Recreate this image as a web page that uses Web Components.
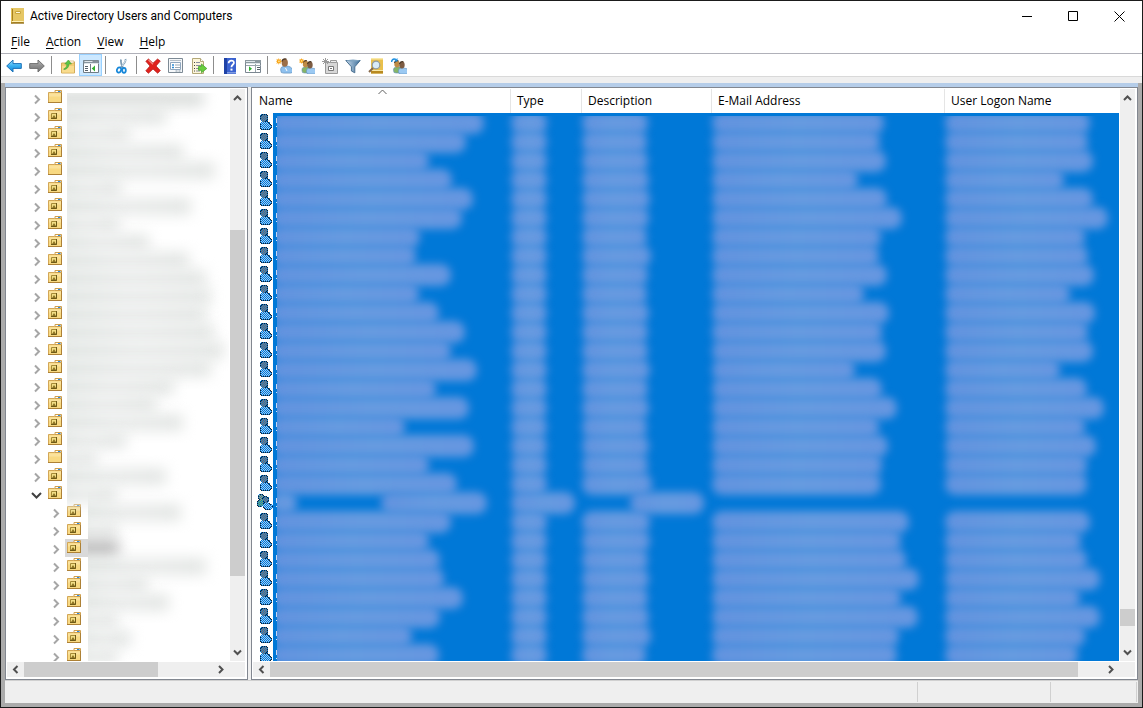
<!DOCTYPE html>
<html lang="en">
<head>
<meta charset="utf-8">
<title>Active Directory Users and Computers</title>
<style>
  html, body { margin: 0; height: 100%; }
  body { font: 12px/16px "Open Sans", "Noto Sans", sans-serif; color: #000; background: #efefef; overflow: hidden; }
</style>
</head>
<body>
<ad-window></ad-window>
<script>
/* ---------- helpers ---------- */
const svg = (w, h, body) => `<svg width="${w}" height="${h}" viewBox="0 0 ${w} ${h}" aria-hidden="true">${body}</svg>`;

class Base extends HTMLElement {
  connectedCallback() {
    if (this.shadowRoot) return;
    this.attachShadow({ mode: 'open' });
    this.shadowRoot.innerHTML = this.render();
  }
}

const person = (x, y, head, body) =>
  `<path d="M${x - 3} ${y + 8.500}q-1.600-4.500 1.400-5.200l2.600-.6q5 .4 6 3.800q.5 2.500-2 2.500h-6z" fill="${body}" stroke="#5f8fbd" stroke-width=".6"/><ellipse cx="${x}" cy="${y}" rx="2.700" ry="3.400" fill="${head}"/><path d="M${x - 2.600} ${y - 1}q1-3 4-2.200" stroke="#4c3826" stroke-width="1.100" fill="none"/>`;
const spark = `<path d="M4 0l1 2.400 2.600-1.200-1.200 2.500L9 4.800l-2.600.9 1.100 2.500-2.500-1.100L4 9.600l-1-2.500-2.500 1.100 1.100-2.500L0 4.800l1.600-1.100L.5 1.200 3 2.400z" fill="#f8a61c"/><circle cx="4.200" cy="4.700" r="1.300" fill="#ffe08a"/>`;

const ICONS = {
  back: `<defs><linearGradient id="g" x2="0" y2="1"><stop stop-color="#9fe0ff"/><stop offset=".5" stop-color="#35aef0"/><stop offset="1" stop-color="#1382d4"/></linearGradient></defs><path d="M.7 8L7 2v3.600h8.300v4.800H7V14z" fill="url(#g)" stroke="#1d72b8"/>`,
  forward: `<defs><linearGradient id="g" x2="0" y2="1"><stop stop-color="#c2c2c2"/><stop offset=".5" stop-color="#8d8d8d"/><stop offset="1" stop-color="#777"/></linearGradient></defs><path d="M15.300 8L9 2v3.600H.7v4.800H9V14z" fill="url(#g)" stroke="#707070"/>`,
  up: `<path d="M1.500 5h5l1-1h7v11h-13z" fill="#f3cd73" stroke="#d3ac5b"/><path d="M9 3h5v2H9z" fill="#fff" stroke="#c99d45" stroke-width=".6"/><path d="M2 8h12v6.500H2z" fill="#f9dc8e"/><path d="M3.500 11c3-1 3.300-3 3.300-5H4.800L8.300 2 11.500 6H9c0 3.500-2.500 5.500-5 5.500z" fill="#5cc446" stroke="#3a9a30" stroke-width=".5"/>`,
  panes: `<path d="M.5 2.500h15v12H.5z" fill="#fff" stroke="#6f7c86"/><path d="M.5 2.500h15v3H.5z" fill="#87949d"/><path d="M1.500 3.500h8M1.500 5.500h14" stroke="#dfe6ea"/><path d="M7.500 6v8" stroke="#6f7c86"/><path d="M2 8.500h3M2 10.500h3M2 12.500h3" stroke="#56616a"/><path d="M12 7.500v6L8.700 10.500z" fill="#2fb02f"/>`,
  cut: `<path d="M11.500 1c1 3-2.500 5-5 9M7 1.500c-.5 3 0 5 2.500 9" stroke="#7d9cb4" stroke-width="1.800" fill="none"/><path d="M12.300 1.500L8 8" stroke="#dce8f0"/><ellipse cx="5" cy="12" rx="2" ry="2.600" fill="none" stroke="#1687d9" stroke-width="1.800" transform="rotate(25 5 12)"/><ellipse cx="10" cy="12.300" rx="1.800" ry="2.500" fill="none" stroke="#1687d9" stroke-width="1.800"/>`,
  delete: `<path d="M3.500 1L8 5.200 12.500 1 15.300 3 11 8l4.300 4.600-2.600 2.700L8 11l-4.600 4.300L.8 12.800 5 8 .8 3.300z" fill="#e0221d" stroke="#b01714" stroke-width=".7"/><path d="M3.500 2L8 6.300" stroke="#f58a80" stroke-width="1.200"/>`,
  props: `<path d="M.5.5h14v14H.5z" fill="#f6f8fa" stroke="#7d8a95"/><path d="M2 2.500h11" stroke="#b4bec6"/><path d="M2.500 4.500h10v7h-10z" fill="#fff" stroke="#8fa6bd"/><path d="M4 7h2M4 9.500h2" stroke="#2d8bd2" stroke-width="1.500"/><path d="M7 7h5M7 9.500h5" stroke="#9ba9b4"/><path d="M7.500 13h2M10.500 13h2" stroke="#8496a5"/>`,
  export: `<path d="M1.500.5h8l3 3v12h-11z" fill="#fdf6da" stroke="#b3a878"/><path d="M9.500.5v3h3" fill="#fff" stroke="#b3a878"/><path d="M3 4.500h1M3 7.500h1M3 10.500h1M3 13h1" stroke="#444"/><path d="M5 4.500h4M5 7.500h5M5 10.500h3M5 13h4" stroke="#8b8fa0"/><path d="M7.500 8.500h3V6l5.300 4.500-5.300 4.300v-2.500h-3z" fill="#69cf3f" stroke="#3f9e25" stroke-width=".7"/>`,
  help: `<path d="M2 0h12v16H2z" fill="#3a62d0"/><path d="M2 0h3v16H2z" fill="#1f42a6"/><path d="M5 14h9v1.500H5z" fill="#7f9be0"/><path d="M6.600 5.200c0-3.600 5.800-3.400 5.300-.2-.3 1.800-2.500 1.900-2.500 4.200" fill="none" stroke="#fff" stroke-width="1.700"/><rect x="8.500" y="10.600" width="2" height="2" fill="#fff"/>`,
  list: `<path d="M.5 2.500h15v12H.5z" fill="#fff" stroke="#7b8791"/><path d="M0 2h16v3H0z" fill="#8c989f"/><path d="M1 3.500h9M1 5.500h14" stroke="#dfe6ea"/><path d="M10.500 6v8M1 7.500h15" stroke="#9aa5ad"/><path d="M4 8.200v5l3-2.500z" fill="#2fb02f"/><path d="M12 9.500h3M12 11.500h3" stroke="#56616a"/>`,
  user: `<g transform="translate(-1 -1) scale(1.150)">${person(8.500, 5, '#9c6f48', '#8fc1ee')}</g><path d="M9.500 10l1.500 3" stroke="#fff"/><g transform="scale(.7)">${spark}</g>`,
  group: person(6.500, 6, '#c08c46', '#86b566') + person(11, 7, '#7d5c43', '#9bc9f2') + `<g transform="scale(.62)">${spark}</g>`,
  ou: `<path d="M3.500 4.500h12v11h-12z" fill="#d7d7d7" stroke="#9a9a9a"/><path d="M8.500 2.500h6v2h-6z" fill="#eee" stroke="#9a9a9a"/><path d="M6.500 8.500h5v4h-5z" fill="#fff" stroke="#777"/><path d="M8 10.500h2" stroke="#777"/><path d="M3.500 0v7M0 3.500h7M1 1l5 5M6 1L1 6" stroke="#9a9a9a"/>`,
  filter: `<defs><linearGradient id="g"><stop stop-color="#c9dcec"/><stop offset="1" stop-color="#3c6d99"/></linearGradient></defs><path d="M.8 2.500h14.400L9.800 8.800v6L6.400 13V8.800z" fill="url(#g)" stroke="#4a7091"/><ellipse cx="8" cy="2.600" rx="6.500" ry="1" fill="#7fa3c0"/>`,
  find: `<path d="M3 0h12v15.500H3z" fill="#e9c04c"/><path d="M3 0h12v1.500H3zM3 12h12v1H3z" fill="#f9e9a8"/><path d="M3 13h12v2.500H3z" fill="#b98a20"/><circle cx="8" cy="7" r="3.800" fill="#d9ecf8" stroke="#8d99a0" stroke-width="1.200"/><path d="M5 10L1 14" stroke="#87694a" stroke-width="2"/>`,
  people: person(6, 6, '#c08c46', '#86b566') + person(11, 7, '#7d5c43', '#9bc9f2') + `<path d="M.5 4C1 1 3 .5 5 1.500" fill="none" stroke="#1d8fe0" stroke-width="1.500"/><path d="M6.500 0v3.500H3z" fill="#1d8fe0"/>`
};

/* 12x16 sprites: # outline, h head, b body, g second body */
const USER = [
  '.######.....', '##hhhh##....', '#hhhhhh#....', '#hhhhhh#....', '#hhhhhh#....', '#hhhhhh#....',
  '.#hhhh##....', '..#hh###....', '.#bbbbbb##..', '#bbbbbbbb#..', '#bbbbbbbbb#.', '#bbbbbbbbbb#',
  '#bbbbbbbbbb#', '#bbbbbbbbbb#', '#bbbbbbbbb#.', '.#########..'];
const GROUP = [
  '..####..........', '.#yyyy#.........', '.#yyyy####......', '.#yyyy#hhh##....', '.#yyy#hhhhh#....', '..#yy#hhhhh#....',
  '.#gggg#hhhh#....', '#ggggg##hh##....', '#gggggg#hh#.....', '#ggggg#bbbbb#...', '#ggggg#bbbbbb##.', '#gggg#bbbbbbbbb#',
  '.####.#bbbbbbbb#', '......#bbbbbbbb#', '.......#bbbbbb#.', '........######..'];
const INK = { '#': '#1c1f26', h: '#a0765a', b: '#9dccf5', g: '#7fb257', y: '#c9a24c' };
function sprite(rows, phase) {
  let out = '';
  rows.forEach((row, y) => [...row].forEach((c, x) => {
    if (c === '.') return;
    const fill = (x + y + phase) % 2 ? '#0078d7' : INK[c];
    out += `<rect x="${x}" y="${y}" width="1" height="1" fill="${fill}"/>`;
  }));
  return `<svg width="${rows[0].length}" height="16" shape-rendering="crispEdges" aria-hidden="true">${out}</svg>`;
}

/* ---------- toolbar ---------- */
customElements.define('tool-button', class extends Base {
  render() {
    const n = this.getAttribute('icon');
    return `<style>
      :host { display: block; flex: none; }
      button { display: flex; align-items: center; justify-content: center; width: 23px; height: 22px; padding: 1px 0 0; border: 1px solid transparent; box-sizing: border-box; background: none; }
      :host([pressed]) button { background: #cce8ff; border-color: #99d1ff; }
      svg { display: block; flex: none; }
    </style><button title="${this.getAttribute('label')}" aria-label="${this.getAttribute('label')}">${svg(16, 16, ICONS[n])}</button>`;
  }
});
customElements.define('tool-separator', class extends Base {
  render() {
    return `<style>:host { display: block; flex: none; width: 8px; height: 18px; }
      i { display: block; width: 1px; height: 18px; margin-left: 3px; background: #8d8d8d; }</style><i></i>`;
  }
});
customElements.define('tool-bar', class extends Base {
  render() {
    return `<style>:host { display: flex; align-items: center; height: 22px; padding-left: 1px; background: #fff; border-top: 1px solid #b0b1b9; border-bottom: 1px solid #d9d9d9; }</style><slot></slot>`;
  }
});

/* ---------- title and menus ---------- */
customElements.define('title-bar', class extends Base {
  render() {
    return `<style>
      :host { display: flex; height: 30px; background: #fff; align-items: center; }
      .book { display: block; margin: 0 6px 0 10px; flex: none; }
      h1 { font: 12px/16px Roboto, "Open Sans", sans-serif; margin: 0; flex: 1; white-space: nowrap; }
      button { width: 46px; height: 30px; padding: 0; border: 0; background: none; display: flex; align-items: center; justify-content: center; }
    </style>
    <svg class="book" width="13" height="16" viewBox="0 0 13 16" aria-hidden="true"><path d="M0 .5h12.500V15H0z" fill="#c9a02c"/><path d="M2 0h11v13H2z" fill="#e6c765"/><path d="M0 0h2v15.500H0z" fill="#e3c358"/><path d="M1.500 1v12" stroke="#a88120"/><path d="M4.500 3.500h5v2h-5z" fill="#fdf8dd" stroke="#c9a63c"/><path d="M1 13.500h11.500" stroke="#fff2b8"/><path d="M0 15h13" stroke="#94701a" stroke-width="1.400"/></svg>
    <h1><slot></slot></h1>
    <button aria-label="Minimize">${svg(10, 10, '<path d="M0 5.500h10" stroke="#000"/>')}</button>
    <button aria-label="Maximize">${svg(10, 10, '<path d="M.5.5h9v9h-9z" fill="none" stroke="#000"/>')}</button>
    <button aria-label="Close">${svg(11, 11, '<path d="M.5.5l10 10M10.500.5l-10 10" stroke="#000"/>')}</button>`;
  }
});
customElements.define('menu-bar', class extends Base {
  render() {
    return `<style>
      :host { display: flex; height: 22px; padding-left: 2px; background: #fff; }
      button { font: inherit; color: inherit; padding: 0 8px; border: 0; background: none; }
      u { text-underline-offset: 2px; text-decoration-skip-ink: none; }
    </style>
    <button><u>F</u>ile</button><button><u>A</u>ction</button><button><u>V</u>iew</button><button><u>H</u>elp</button>`;
  }
});

/* ---------- scroll bar: before / thumb / after are flex shares ---------- */
const ARROWS = {
  up: 'M1 7L4.500 3.500 8 7', down: 'M1 2.500L4.500 6 8 2.500', left: 'M6.500 1L3 4.500 6.500 8', right: 'M2 1L5.500 4.500 2 8'
};
customElements.define('scroll-bar', class extends Base {
  render() {
    const v = this.hasAttribute('vertical');
    const [a, t, b] = this.getAttribute('share').split(' ');
    const arrow = (n) => `<button aria-label="Scroll ${n}">${svg(9, 9, `<path d="${ARROWS[n]}" fill="none" stroke="#505050" stroke-width="2"/>`)}</button>`;
    return `<style>
      :host { display: flex; flex-direction: ${v ? 'column' : 'row'}; background: #efefef; ${v ? 'width' : 'height'}: 15px; }
      button { flex: none; display: flex; align-items: center; justify-content: center; padding: 0; border: 0; background: none; ${v ? 'width:15px;height:17px' : 'width:17px;height:15px'}; }
      .a { flex: ${a} 0 0px; } .t { flex: ${t} 0 0px; background: #cdcdcd; } .b { flex: ${b} 0 0px; }
    </style>${arrow(v ? 'up' : 'left')}<div class="a"></div><div class="t"></div><div class="b"></div>${arrow(v ? 'down' : 'right')}`;
  }
});

/* ---------- pane: content with both scroll bars ---------- */
customElements.define('scroll-pane', class extends Base {
  render() {
    return `<style>
      :host { display: grid; grid-template: minmax(0, 1fr) 15px / minmax(0, 1fr) 15px; gap: 1px 0; box-sizing: border-box; border: 1px solid #828790; background: #fff; padding: 1px 2px 2px 1px; min-width: 0; min-height: 0; }
      .view { overflow: hidden; min-width: 0; min-height: 0; margin-right: 1px; }
      .corner { background: #efefef; }
    </style>
    <div class="view"><slot></slot></div>
    <scroll-bar vertical share="${this.getAttribute('v')}"></scroll-bar>
    <scroll-bar share="${this.getAttribute('h')}"></scroll-bar><div class="corner"></div>`;
  }
});

/* ---------- tree ---------- */
const FOLDER = `<path d="M.5 2.500h6l1-1h6v11H.5z" fill="#f8d982" stroke="#d3a757"/><path d="M1 3.500h12v3H1z" fill="#fbe29c"/><path d="M0 12.500h14M13.500 2v11" stroke="#ad8136"/><path d="M7 .5h6.500v2H7z" fill="#fff" stroke="#cf9f4c"/><path d="M10 1.500h2.500" stroke="#2e8be0"/>`;
const OU = `<path d="M3.500 5.500h5v5h-5z" fill="#f2de86" stroke="#a58a36"/><path d="M4 10l2-3 2 3" fill="#8d7424"/><path d="M3 10.500h5.500V5" stroke="#6e5a17" fill="none"/>`;
customElements.define('tree-item', class extends Base {
  render() {
    const child = this.hasAttribute('child'), open = this.hasAttribute('open'), sel = this.hasAttribute('selected');
    return `<style>
      :host { display: flex; height: 18px; align-items: center; padding-left: ${child ? 43 : 24}px; }
      .tw { flex: none; width: 11px; height: 11px; margin: 2px 4px 0 0; }
      .ic { flex: none; display: flex; padding: 1px 5px 3px 2px; ${sel ? 'background:#d9d9d9;padding-right:7px;margin-right:-2px' : ''} }
      .label { flex: 1; height: 18px; clip-path: inset(-12px 0 -12px ${child ? 2 : 0}px); }
      :host([first]) .label { clip-path: inset(4px 0 -12px 0); }
      .label i { display: block; height: 17px; margin: 1px 0 0 -12px; width: ${+this.getAttribute('w') + 13}px; border-radius: 4px; filter: blur(7px); background: ${sel ? '#bcbcbc' : 'linear-gradient(90deg, #dde2df, #e9ebea 50%, #e2e5e3)'}; }
      :host([first]) i { background: #dcdfdd; }
    </style>
    <svg class="tw" viewBox="0 0 11 11" aria-hidden="true"><path d="${open ? 'M1 3L5.500 7.500 10 3' : 'M4 1.500L8 5.500 4 9.500'}" fill="none" stroke="${open ? '#404040' : '#a6a6a6'}" stroke-width="2"/></svg>
    <span class="ic">${svg(14, 14, FOLDER + (this.hasAttribute('folder') ? '' : OU))}</span>
    <span class="label"><i></i></span>`;
  }
});
customElements.define('directory-tree', class extends Base {
  render() {
    const top = [136, 98, 61, 115, 147, 53, 123, 51, 81, 121, 138, 143, 138, 146, 156, 143, 106, 88, 115, 58, 28, 98, 48];
    const kids = [94, 30, 32, 119, 60, 82, 30, 44, 30];
    return `<style>:host { display: block; }</style>` +
      top.map((w, i) => `<tree-item w="${w}"${i ? '' : ' first'}${[0, 4, 20].includes(i) ? ' folder' : ''}${i === 22 ? ' open' : ''}></tree-item>`).join('') +
      kids.map((w, i) => `<tree-item child w="${w}"${i === 2 ? ' selected' : ''}></tree-item>`).join('');
  }
});

/* ---------- object list ---------- */
customElements.define('object-list', class extends Base {
  render() {
    const name = [208, 190, 153, 176, 197, 186, 144, 140, 175, 143, 163, 189, 175, 201, 160, 193, 129, 198, 153, 181, 211, 175, 153, 164, 168, 187, 164, 136, 163];
    const desc = [66, 65, 66, 67, 68, 67, 65, 69, 66, 65, 67, 66, 66, 68, 66, 67, 65, 67, 66, 70, 75, 68, 68, 66, 67, 66, 67, 69, 64];
    const mail = [172, 168, 174, 146, 175, 190, 169, 167, 175, 152, 177, 170, 174, 143, 170, 185, 167, 176, 170, 169, 0, 197, 189, 194, 207, 189, 206, 187, 185];
    const logon = [145, 143, 148, 119, 148, 163, 140, 143, 149, 125, 150, 143, 148, 115, 142, 159, 140, 151, 142, 142, 0, 145, 136, 142, 155, 135, 155, 140, 133];
    const bar = (w, x = 0) => w ? `<i style="width:${w}px;margin-left:${x}px"></i>` : '';
    const rows = name.map((n, k) => {
      const g = k === 20;
      return `<tr><td class="n"><div class="cell"><span class="ic${g ? ' g' : ''}">${sprite(g ? GROUP : USER, g ? 1 : 0)}</span><span class="soft name">${g ? bar(26, -6) + bar(106, 84) : bar(n + 5, -6)}</span></div></td>
        <td><span class="soft">${bar(g ? 64 : 36)}</span></td><td><span class="soft">${g ? bar(74, 48) : bar(desc[k])}</span></td>
        <td><span class="soft">${bar(mail[k])}</span></td><td><span class="soft">${bar(logon[k])}</span></td></tr>`;
    }).join('');
    return `<style>
      :host { display: block; }
      table { width: 100%; border-collapse: separate; border-spacing: 0; table-layout: fixed; }
      th { position: relative; height: 24px; padding: 0 0 0 6px; box-sizing: border-box; border-right: 1px solid #e5e5e5; text-align: left; font-weight: normal; white-space: nowrap; }
      th:last-child { border-right: 0; }
      .sort { position: absolute; top: 0; left: calc(50% - 4px); }
      td { height: 19px; padding: 0; background: #0078d7; }
      td.n { background: linear-gradient(90deg, #fff 20px, #0078d7 20px); }
      .cell { display: flex; height: 19px; background: linear-gradient(#c8d4f2, #c8d4f2) 23px 5px / 1px 5px no-repeat, linear-gradient(#cfe2f8, #cfe2f8) 23px 13px / 1px 1px no-repeat; }
      .ic { flex: none; display: block; width: 12px; height: 16px; padding: 1px 3px 0 7px; }
      .ic.g { width: 16px; padding: 1px 2px 0 4px; }
      .ic svg { display: block; }
      .soft { display: flex; align-items: center; height: 19px; }
      .name { flex: 1; margin-left: 2px; clip-path: inset(-12px -30px -12px 0); }
      tr:first-child .soft { clip-path: inset(3px -30px -12px -30px); }
      tr:first-child .name { clip-path: inset(3px -30px -12px 0); }
      i { display: block; flex: none; height: 22px; border-radius: 10px; background: linear-gradient(90deg, #6293df, #669be0 50%, #6696e0); filter: blur(4px); }
    </style>
    <table>
      <colgroup><col style="width:258px"><col style="width:71px"><col style="width:130px"><col style="width:233px"><col></colgroup>
      <thead><tr><th scope="col">Name<svg class="sort" width="9" height="6" viewBox="0 0 9 6" aria-hidden="true"><path d="M.5 5L4.500 1l4 4" fill="none" stroke="#606060"/></svg></th><th scope="col">Type</th><th scope="col">Description</th><th scope="col">E-Mail Address</th><th scope="col">User Logon Name</th></tr></thead>
      <tbody>${rows}</tbody>
    </table>`;
  }
});

customElements.define('status-bar', class extends Base {
  render() {
    return `<style>
      :host { display: flex; height: 20px; padding: 1px 1px 1px 0; border-top: 1px solid #d0d0d0; background: #efefef; }
      div { box-sizing: border-box; border-right: 1px solid #d0d0d0; }
    </style><div style="flex:1"></div><div style="width:133px"></div><div style="width:86px"></div>`;
  }
});

/* ---------- window ---------- */
customElements.define('ad-window', class extends Base {
  render() {
    return `<style>
      :host { display: flex; flex-direction: column; height: 100vh; box-sizing: border-box; border: 1px solid #1b1b1b; background: #efefef; }
      .frame { flex: 1; min-height: 0; margin-top: 6px; display: flex; flex-direction: column; border: solid #ababab; border-width: 0 4px 4px; }
      .panes { flex: 1; min-height: 0; display: grid; grid-template-columns: 243px minmax(0, 1fr); grid-template-rows: minmax(0, 1fr); gap: 3px; border-top: 4px solid #b5cde9; }
    </style>
    <title-bar>Active Directory Users and Computers</title-bar>
    <menu-bar></menu-bar>
    <tool-bar>
      <tool-button icon="back" label="Back"></tool-button><tool-button icon="forward" label="Forward"></tool-button><tool-separator></tool-separator>
      <tool-button icon="up" label="Up one level"></tool-button><tool-button icon="panes" label="Show console tree" pressed></tool-button><tool-separator></tool-separator>
      <tool-button icon="cut" label="Cut"></tool-button><tool-separator></tool-separator>
      <tool-button icon="delete" label="Delete"></tool-button><tool-button icon="props" label="Properties"></tool-button><tool-button icon="export" label="Export list"></tool-button><tool-separator></tool-separator>
      <tool-button icon="help" label="Help"></tool-button><tool-button icon="list" label="Show action pane"></tool-button><tool-separator></tool-separator>
      <tool-button icon="user" label="New user"></tool-button><tool-button icon="group" label="New group"></tool-button><tool-button icon="ou" label="New organizational unit"></tool-button><tool-button icon="filter" label="Filter"></tool-button><tool-button icon="find" label="Find"></tool-button><tool-button icon="people" label="Add to a group"></tool-button>
    </tool-bar>
    <div class="frame">
      <div class="panes">
        <scroll-pane v="124 346 68" h="0 135 55"><directory-tree></directory-tree></scroll-pane>
        <scroll-pane v="504 17 18" h="0 808 25"><object-list></object-list></scroll-pane>
      </div>
      <status-bar></status-bar>
    </div>`;
  }
});
</script>
</body>
</html>
